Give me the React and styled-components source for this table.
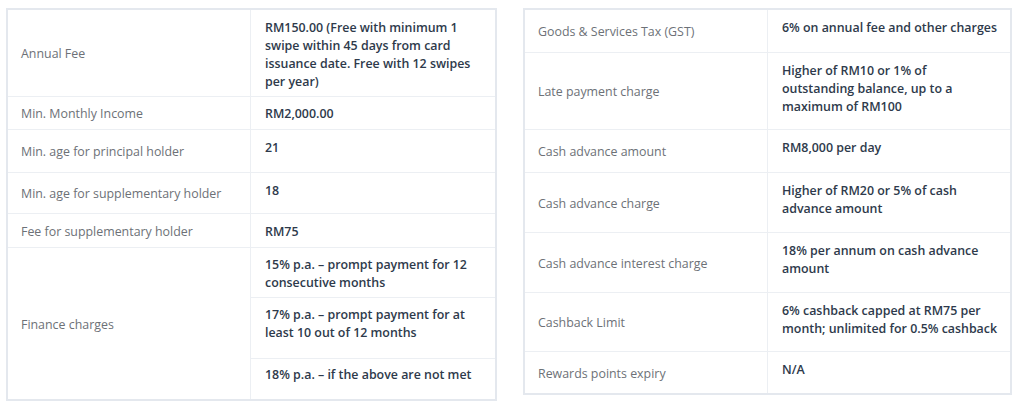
import React from "react";
import styled, { createGlobalStyle } from "styled-components";

const Global = createGlobalStyle`
  html, body { margin: 0; padding: 0; background: #fff; }
  body { font-family: "Open Sans", "Noto Sans", sans-serif; }
`;

const Page = styled.div`
  display: flex;
  align-items: flex-start;
  gap: 26px;
  padding: 8px 0 0 6px;
`;

const Table = styled.div`
  display: grid;
  grid-template-columns: 243px ${(p) => p.$valueWidth}px;
  grid-template-rows: ${(p) => p.$rows};
  border: 2px solid #e4e8ee;
  background: #fff;
`;

const Label = styled.div`
  box-sizing: border-box;
  display: flex;
  align-items: center;
  padding: 2px 13px 0;
  font-size: 12.4px;
  line-height: 18px;
  color: #6d7177;
  border-right: 1px solid #eceff3;
  border-bottom: ${(p) => (p.$last ? "none" : "1px solid #eceff3")};
  grid-row: ${(p) => (p.$span ? `span ${p.$span}` : "auto")};
`;

const Value = styled.div`
  box-sizing: border-box;
  padding: ${(p) => p.$top ?? 9}px 10px 0 14px;
  font-size: 12.4px;
  line-height: 18px;
  font-weight: 600;
  color: #2e3a4b;
  border-bottom: ${(p) => (p.$last ? "none" : "1px solid #eceff3")};
`;

const left = [
  { l: "Annual Fee", v: "RM150.00 (Free with minimum 1 swipe within 45 days from card issuance date. Free with 12 swipes per year)" },
  { l: "Min. Monthly Income", v: "RM2,000.00", top: 8 },
  { l: "Min. age for principal holder", v: "21" },
  { l: "Min. age for supplementary holder", v: "18" },
  { l: "Fee for supplementary holder", v: "RM75" },
];

const finance = [
  { v: "15% p.a. – prompt payment for 12 consecutive months", top: 8 },
  { v: "17% p.a. – prompt payment for at least 10 out of 12 months", top: 8 },
  { v: "18% p.a. – if the above are not met", top: 7 },
];

const right = [
  { l: "Goods & Services Tax (GST)", v: "6% on annual fee and other charges" },
  { l: "Late payment charge", v: "Higher of RM10 or 1% of outstanding balance, up to a maximum of RM100" },
  { l: "Cash advance amount", v: "RM8,000 per day" },
  { l: "Cash advance charge", v: "Higher of RM20 or 5% of cash advance amount" },
  { l: "Cash advance interest charge", v: "18% per annum on cash advance amount" },
  { l: "Cashback Limit", v: "6% cashback capped at RM75 per month; unlimited for 0.5% cashback" },
  { l: "Rewards points expiry", v: "N/A" },
];

export default function App() {
  return (
    <>
      <Global />
      <Page>
        <Table $valueWidth={244} $rows="87px 33px 43px 41px 34px 50px 61px 40px">
          {left.map((r) => (
            <React.Fragment key={r.l}>
              <Label>{r.l}</Label>
              <Value $top={r.top}>{r.v}</Value>
            </React.Fragment>
          ))}
          <Label $span={3} $last>Finance charges</Label>
          {finance.map((f, i) => (
            <Value key={i} $top={f.top} $last={i === finance.length - 1}>
              {f.v}
            </Value>
          ))}
        </Table>
        <Table $valueWidth={242} $rows="43px 77px 43px 60px 60px 59px 41px">
          {right.map((r, i) => (
            <React.Fragment key={r.l}>
              <Label $last={i === right.length - 1}>{r.l}</Label>
              <Value $last={i === right.length - 1}>{r.v}</Value>
            </React.Fragment>
          ))}
        </Table>
      </Page>
    </>
  );
}
